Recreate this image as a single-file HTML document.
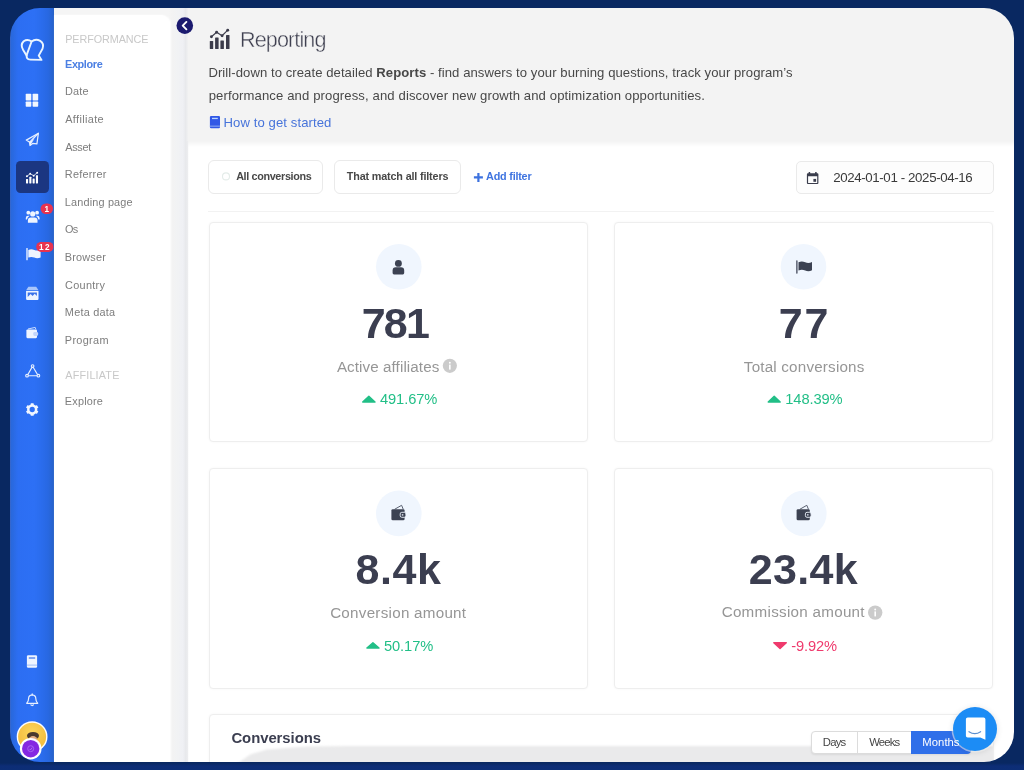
<!DOCTYPE html>
<html>
<head>
<meta charset="utf-8">
<title>Reporting</title>
<style>
*{box-sizing:border-box;margin:0;padding:0}
html,body{width:1024px;height:770px;overflow:hidden;background:linear-gradient(180deg,#092861 0,#092861 763px,#0d2d76 766px,#0c2e76 770px);font-family:"Liberation Sans",sans-serif;}
#win{position:absolute;left:10px;top:8px;width:1004px;height:754px;border-radius:30px;overflow:hidden;}
#pg{position:absolute;left:-10px;top:-8px;width:1024px;height:770px;filter:opacity(1);}
.a{position:absolute}
.t{position:absolute;white-space:nowrap}
.ov{position:absolute;left:0;top:0;overflow:visible}
#rail{left:10px;top:8px;width:44px;height:754px;background:linear-gradient(90deg,#3a66c6 0,#2968dc 1.5px,#2c6ef2 8px,#2d70f5 24px,#2a6cec 32px,#2868e2 38px,#2764d2 42px,#2660c6 44px);}
#subshade{left:54px;top:8px;width:132px;height:754px;background:linear-gradient(90deg,#f5f5f5 0,#f5f5f5 115px,#f3f3f3 118px,#f1f2f4 124px,#eff0f4 129px,#e8e9ec 131.5px,#e9eaed 132px);}
#sub{left:54px;top:15px;width:116px;height:747px;background:#fff;border-top-right-radius:9px;box-shadow:1px 0 2px rgba(255,255,255,.9)}
#main{left:186px;top:8px;width:828px;height:754px;background:linear-gradient(90deg,#e9eaed 0,#f3f3f3 2.5px);}
#content{left:188px;top:141px;width:826px;height:621px;background:linear-gradient(180deg,#f3f3f3 0,#fff 6px);}
.card{position:absolute;width:379px;height:220.5px;background:#fff;border:1px solid #eee;border-radius:4px;box-shadow:0 0 3px rgba(0,0,0,.035);}
.btn{position:absolute;border:1px solid #eaeaea;background:#fff;}
</style>
</head>

<body>
<div id="win"><div id="pg">
<div class="a" id="rail"></div>
<div class="a" id="subshade"></div>
<div class="a" id="sub"></div>
<div class="a" id="main"></div>
<div class="a" id="content"></div>
<div class="a" style="left:186px;top:141px;width:3px;height:621px;background:linear-gradient(90deg,#e9eaed 0,rgba(255,255,255,0) 100%)"></div>
<div class="a" style="left:15.9px;top:161.2px;width:33px;height:32px;border-radius:4.5px;background:#1b3681"></div>

<div class="btn" style="left:208px;top:160px;width:115px;height:34px;border-radius:6px"></div>
<div class="btn" style="left:334px;top:160px;width:126.5px;height:34px;border-radius:6px"></div>
<div class="btn" style="left:795.5px;top:160.5px;width:198px;height:33.5px;border-radius:5px;background:#fdfdfd"></div>
<div class="a" style="left:208px;top:210.5px;width:786px;height:1.5px;background:#f2f2f2"></div>

<div class="card" style="left:208.5px;top:221.8px"></div>
<div class="card" style="left:614px;top:221.8px"></div>
<div class="card" style="left:208.5px;top:468.2px"></div>
<div class="card" style="left:614px;top:468.2px"></div>

<div class="a" style="left:208.5px;top:714.3px;width:785px;height:80px;background:#fff;border:1px solid #eee;border-radius:4px;overflow:hidden;box-shadow:0 0 3px rgba(0,0,0,.035)">
  <div class="a" style="left:0;top:28px;width:785px;height:24px;filter:blur(1.1px)"><div class="a" style="left:0;top:1px;width:785px;height:20px;background:#eaeaeb;clip-path:polygon(3.4% 100%,5.2% 51%,7.3% 26%,12.3% 11.5%,17.3% 8%,100% 8%,100% 100%)"></div></div>
</div>

<!-- days / weeks / months -->
<div class="a" style="left:811px;top:731px;width:160px;height:23px;border:1px solid #dcdcdc;border-radius:4px;background:#fff;box-shadow:0 1px 2px rgba(0,0,0,.08)"></div>
<div class="a" style="left:857px;top:731px;width:1px;height:23px;background:#dcdcdc"></div>
<div class="a" style="left:910.5px;top:731px;width:60.5px;height:23px;background:#2f6fe9;border-radius:0 4px 4px 0"></div>
<!-- chat bubble -->
<div class="a" style="left:953px;top:707px;width:44px;height:44px;border-radius:50%;background:#1c8cf5;box-shadow:0 1px 6px rgba(0,0,0,.12),0 0 0 1.5px rgba(255,255,255,.55)"></div>

<svg class="ov" width="1024" height="770" viewBox="0 0 1024 770">
<!-- logo -->
<g fill="none" stroke="#eaf5ff" stroke-width="1.9" stroke-linejoin="round" stroke-linecap="round">
<path d="M31.6 41.5 L26.9 54.4 Q25.7 59.4 30.3 59.6 L41.5 59.9 L38.7 55.6 L42.5 48.8 Q44.4 43.6 40.2 40.9 Q35.6 38.4 31.6 41.5 Z"/>
<path d="M31.6 41.5 Q27.6 38.5 23.7 41.2 Q20.2 44.6 22.9 49.4 L26.5 55.4"/>
</g>
<!-- grid -->
<g fill="#f1f6ff">
<rect x="25.7" y="93.8" width="5.6" height="6.6" rx=".7"/><rect x="32.6" y="93.8" width="5.6" height="6.6" rx=".7"/>
<rect x="25.7" y="101.6" width="5.6" height="5.1" rx=".7"/><rect x="32.6" y="101.6" width="5.6" height="5.1" rx=".7"/>
</g>
<!-- paper plane -->
<g fill="none" stroke="#e6efff" stroke-width="1.25" stroke-linejoin="round">
<path d="M38.4 133.2 L26.3 140.1 L29.6 142.3 L30 145.5 L32.6 143.4 L36.9 143.9 Z"/>
<path d="M38.4 133.2 L29.6 142.3"/>
</g>
<path d="M29.6 142.3 L30 145.6 L34.6 138.6 Z" fill="#eef4ff"/>
<!-- chart (active) -->
<g fill="#fff">
<rect x="26" y="178.9" width="2.1" height="4.5" rx=".4"/><rect x="29.3" y="176.8" width="2.1" height="6.6" rx=".4"/>
<rect x="32.6" y="178.5" width="2.1" height="4.9" rx=".4"/><rect x="35.9" y="175.2" width="2.1" height="8.2" rx=".4"/>
<circle cx="26.9" cy="176.3" r=".95"/><circle cx="30.2" cy="173.7" r=".95"/><circle cx="33.7" cy="175.7" r=".95"/><circle cx="37.2" cy="172.7" r=".95"/>
</g>
<path d="M26.9 176.3 L30.2 173.7 L33.7 175.7 L37.2 172.7" fill="none" stroke="#fff" stroke-width=".8"/>
<!-- users -->
<g fill="#eef4ff">
<circle cx="32.7" cy="213.9" r="2.6"/><circle cx="28.3" cy="212.7" r="1.9"/><circle cx="37.1" cy="212.7" r="1.9"/>
<path d="M27.9 222.7 L27.9 220.6 Q27.9 217.6 30.9 217.6 L34.5 217.6 Q37.5 217.6 37.5 220.6 L37.5 222.7 Z"/>
<path d="M25.8 219.6 L25.8 217.9 Q25.8 215.8 28 215.8 L29.6 215.8 Q27.3 217.2 27 219.6 Z"/>
<path d="M39.6 219.6 L39.6 217.9 Q39.6 215.8 37.4 215.8 L35.8 215.8 Q38.1 217.2 38.4 219.6 Z"/>
</g>
<rect x="40.6" y="203.4" width="12.4" height="10.5" rx="5.2" fill="#e8334f"/>
<!-- flag -->
<rect x="26.3" y="247.9" width="1.4" height="12.4" rx=".6" fill="#e8f0ff"/>
<path d="M28.3 249.9 Q31.3 248.6 34.3 249.9 Q37.5 251.2 40.6 249.7 L40.6 257.4 Q37.5 258.9 34.3 257.6 Q31.3 256.3 28.3 257.6 Z" fill="#eef4ff"/>
<rect x="36.2" y="241.9" width="17.3" height="10" rx="5" fill="#e8334f"/>
<!-- images -->
<path d="M28.4 286.8 L36.2 286.8 L38.5 290.2 L26.1 290.2 Z" fill="#a9c6fb"/>
<path d="M26.1 290.9 H38.5 V299.1 Q38.5 299.9 37.7 299.9 H26.9 Q26.1 299.9 26.1 299.1 Z" fill="#eef4ff"/>
<path d="M27.7 292.4 H36.9 V296 L34.7 293.7 L32.6 296 L30.6 294 L27.7 297 Z" fill="#3a72ea"/>
<!-- wallet -->
<path d="M28 329 L35.2 327.4 L35.8 329.2" fill="none" stroke="#c9dcff" stroke-width="1"/>
<rect x="26.4" y="329.4" width="10.6" height="8.8" rx="1.1" fill="#eef4ff"/>
<rect x="33.3" y="331.9" width="4.8" height="4" rx="1.3" fill="#c4d6fb"/>
<!-- triangle nodes -->
<g fill="none" stroke="#e8f0ff" stroke-width="1.15">
<path d="M32.6 366.3 L27.2 375.7 L38.2 375.7 Z"/>
</g>
<g fill="#3a74ec" stroke="#e8f0ff" stroke-width="1.05"><circle cx="32.6" cy="366" r="1.35"/><circle cx="27" cy="375.7" r="1.35"/><circle cx="38.4" cy="375.7" r="1.35"/></g>
<!-- gear -->
<g transform="translate(32.2 409.5)">
<circle r="3.9" fill="none" stroke="#f1f6ff" stroke-width="2.5"/>
<g fill="#f1f6ff">
<rect x="-1.5" y="-6.3" width="3" height="2.4" rx=".5"/>
<rect x="-1.5" y="-6.3" width="3" height="2.4" rx=".5" transform="rotate(60)"/>
<rect x="-1.5" y="-6.3" width="3" height="2.4" rx=".5" transform="rotate(120)"/>
<rect x="-1.5" y="-6.3" width="3" height="2.4" rx=".5" transform="rotate(180)"/>
<rect x="-1.5" y="-6.3" width="3" height="2.4" rx=".5" transform="rotate(240)"/>
<rect x="-1.5" y="-6.3" width="3" height="2.4" rx=".5" transform="rotate(300)"/>
</g></g>
<!-- book -->
<rect x="26.9" y="655.3" width="10.2" height="12.4" rx="1.3" fill="#eef4ff"/>
<rect x="28.8" y="657.4" width="6.4" height="1.2" fill="#3a72ea"/>
<rect x="26.9" y="664.6" width="10.2" height="1" fill="#9fbdf8"/>
<!-- bell -->
<g fill="none" stroke="#e8f0ff" stroke-width="1.2" stroke-linejoin="round" stroke-linecap="round">
<path d="M26.7 703.3 Q28.6 701.6 28.6 698.6 Q28.6 695.2 32.2 694.9 Q35.8 695.2 35.8 698.6 Q35.8 701.6 37.7 703.3 Z"/>
<path d="M30.9 704.9 Q32.2 706.1 33.5 704.9"/>
<path d="M32.2 693.9 V694.8"/>
</g>
<!-- avatar -->
<defs><radialGradient id="av" cx="50%" cy="35%" r="70%"><stop offset="0" stop-color="#fbd55a"/><stop offset="1" stop-color="#f1b83a"/></radialGradient>
<clipPath id="avc"><circle cx="32.1" cy="736.7" r="14"/></clipPath></defs>
<circle cx="32.1" cy="736.7" r="15.4" fill="#fdfdfd"/>
<circle cx="32.1" cy="736.7" r="14" fill="url(#av)"/>
<g clip-path="url(#avc)"><ellipse cx="33" cy="735.8" rx="6" ry="3.9" fill="#4a3a2e"/><ellipse cx="33" cy="740.6" rx="4.4" ry="4.6" fill="#e2ae86"/></g>
<circle cx="30.7" cy="748.7" r="10.8" fill="#fdfdfd"/>
<circle cx="30.7" cy="748.7" r="8.7" fill="#8427e2"/>
<circle cx="30.7" cy="748.7" r="3" fill="none" stroke="#a866f0" stroke-width=".9"/>
<path d="M29.5 748.9 L30.5 749.9 L32.2 747.7" fill="none" stroke="#b783f4" stroke-width=".8"/>
<!-- collapse -->
<circle cx="184.8" cy="25.6" r="8.3" fill="#1b1a6f"/>
<path d="M186.4 21.9 L182.7 25.6 L186.4 29.3" fill="none" stroke="#fff" stroke-width="1.9" stroke-linecap="round" stroke-linejoin="round"/>
<!-- title icon -->
<g fill="#3c3c4b">
<rect x="209.8" y="41.1" width="3.4" height="7.8" rx=".5"/><rect x="215.1" y="37.4" width="3.5" height="11.5" rx=".5"/>
<rect x="220.4" y="40.6" width="3.5" height="8.3" rx=".5"/><rect x="226" y="34.9" width="3.5" height="14" rx=".5"/>
<circle cx="211.4" cy="36.7" r="1.45"/><circle cx="216.6" cy="32.2" r="1.45"/><circle cx="222.1" cy="35.7" r="1.45"/><circle cx="227.7" cy="30.2" r="1.45"/>
</g>
<path d="M211.4 36.7 L216.6 32.2 L222.1 35.7 L227.7 30.2" fill="none" stroke="#3c3c4b" stroke-width="1.15"/>
<!-- small book -->
<rect x="209.9" y="115.9" width="10.1" height="12.3" rx="1.2" fill="#3158e6"/>
<rect x="212" y="117.8" width="5.8" height="1.3" fill="#bcd6ff"/>
<rect x="209.9" y="125.6" width="10.1" height="1.1" fill="#88a6f3"/>
<!-- ring in All conversions -->
<circle cx="226" cy="176.4" r="3.5" fill="none" stroke="#e4ece9" stroke-width="1.1"/>
<!-- plus -->
<path d="M477.3 172.9 h2.2 v3.4 h3.4 v2.2 h-3.4 v3.4 h-2.2 v-3.4 h-3.4 v-2.2 h3.4 z" fill="#3d72df"/>
<!-- calendar -->
<g fill="#3a3d4c">
<path d="M807.9 173.2 H817.4 Q818.4 173.2 818.4 174.2 V183.1 Q818.4 184.1 817.4 184.1 H807.9 Q806.9 184.1 806.9 183.1 V174.2 Q806.9 173.2 807.9 173.2 Z M808.1 176.2 V182.9 H817.2 V176.2 Z" fill-rule="evenodd"/>
<rect x="808.6" y="171.9" width="1.6" height="2.4" rx=".4"/><rect x="815.1" y="171.9" width="1.6" height="2.4" rx=".4"/>
<rect x="813.4" y="178.9" width="2.7" height="2.9"/>
</g>
<!-- card icon circles -->
<g fill="#f0f6fe"><circle cx="398.8" cy="266.8" r="22.8"/><circle cx="803.5" cy="266.8" r="22.8"/><circle cx="398.8" cy="513.4" r="22.8"/><circle cx="803.8" cy="513.4" r="22.8"/></g>
<!-- person -->
<g fill="#3c4252"><circle cx="398.4" cy="263.4" r="3.45"/>
<path d="M392.6 273 V270.4 Q392.6 267.2 395.8 267.2 H401 Q404.2 267.2 404.2 270.4 V273 Q404.2 274.4 402.8 274.4 H394 Q392.6 274.4 392.6 273 Z"/></g>
<!-- flag -->
<rect x="796" y="260.2" width="1.7" height="13.6" rx=".7" fill="#6b7180"/>
<path d="M798.5 262.3 Q801.8 260.8 805.2 262.3 Q808.6 263.8 812 262 L812 270.2 Q808.6 272 805.2 270.5 Q801.8 269 798.5 270.5 Z" fill="#3c4252"/>
<!-- wallets -->
<g id="wal">
<path d="M394.6 509.3 L401.6 505.3 L403.3 509.4" fill="none" stroke="#596070" stroke-width="1"/>
<rect x="391.4" y="509.2" width="13.2" height="11.1" rx="1.4" fill="#3c4252"/>
<rect x="400.2" y="512.3" width="5.7" height="5" rx="1.6" fill="#3c4252" stroke="#edf4fd" stroke-width=".9"/>
<circle cx="402.6" cy="514.8" r=".9" fill="#cfd6e2"/>
</g>
<use href="#wal" x="405.2" y="0"/>
<!-- info icons -->
<circle cx="449.85" cy="365.8" r="7.1" fill="#cbcbcb"/><rect x="449.05" y="364.6" width="1.6" height="5" fill="#fff"/><circle cx="449.85" cy="362.7" r=".95" fill="#fff"/>
<circle cx="875.2" cy="612.6" r="7.2" fill="#cbcbcb"/><rect x="874.4" y="611.4" width="1.6" height="5" fill="#fff"/><circle cx="875.2" cy="609.5" r=".95" fill="#fff"/>
<!-- carets -->
<g fill="#22bf87" stroke="#22bf87" stroke-width="1.4" stroke-linejoin="round">
<path d="M368.85 396.3 L375 402 L362.7 402 Z"/>
<path d="M774.2 396.3 L780.2 402 L768.2 402 Z"/>
<path d="M372.95 642.8 L379 648.1 L366.9 648.1 Z"/>
</g>
<path d="M773.8 642.8 L786.3 642.8 L780.05 648.6 Z" fill="#ef3a6d" stroke="#ef3a6d" stroke-width="1.4" stroke-linejoin="round"/>
<!-- chat icon -->
<path d="M967.7 717.4 H983.6 Q985.4 717.4 985.4 719.2 V739.7 L980.3 737.6 H967.7 Q965.9 737.6 965.9 735.8 V719.2 Q965.9 717.4 967.7 717.4 Z" fill="#fff"/>
<path d="M969 731.7 Q974.8 735.7 980.6 731.7" fill="none" stroke="#5b8fd0" stroke-width="1.2" stroke-linecap="round"/>
</svg>
<div class="t" id="h_perf" style="left:65.15px;top:32.00px;font-size:10.8px;line-height:14px;color:#c8c8c8;letter-spacing:-0.065px;">PERFORMANCE</div>
<div class="t" id="n_exp" style="left:65.00px;top:57.00px;font-size:10.9px;line-height:14px;color:#4b7fe3;font-weight:bold;letter-spacing:-0.375px;">Explore</div>
<div class="t" id="n_date" style="left:65.00px;top:84.00px;font-size:10.9px;line-height:14px;color:#7d7d7d;letter-spacing:0.167px;">Date</div>
<div class="t" id="n_aff" style="left:65.25px;top:112.00px;font-size:10.9px;line-height:14px;color:#7d7d7d;letter-spacing:0.356px;">Affiliate</div>
<div class="t" id="n_asset" style="left:65.25px;top:140.00px;font-size:10.9px;line-height:14px;color:#7d7d7d;letter-spacing:-0.312px;">Asset</div>
<div class="t" id="n_ref" style="left:64.85px;top:167.00px;font-size:10.9px;line-height:14px;color:#7d7d7d;letter-spacing:0.214px;">Referrer</div>
<div class="t" id="n_land" style="left:64.85px;top:195.00px;font-size:10.9px;line-height:14px;color:#7d7d7d;letter-spacing:0.159px;">Landing page</div>
<div class="t" id="n_os" style="left:65.10px;top:222.00px;font-size:10.9px;line-height:14px;color:#7d7d7d;letter-spacing:-0.850px;">Os</div>
<div class="t" id="n_brow" style="left:64.85px;top:250.00px;font-size:10.9px;line-height:14px;color:#7d7d7d;letter-spacing:0.167px;">Browser</div>
<div class="t" id="n_cty" style="left:65.10px;top:278.00px;font-size:10.9px;line-height:14px;color:#7d7d7d;letter-spacing:0.275px;">Country</div>
<div class="t" id="n_meta" style="left:64.85px;top:305.00px;font-size:10.9px;line-height:14px;color:#7d7d7d;letter-spacing:0.238px;">Meta data</div>
<div class="t" id="n_prog" style="left:64.85px;top:333.00px;font-size:10.9px;line-height:14px;color:#7d7d7d;letter-spacing:0.317px;">Program</div>
<div class="t" id="h_aff" style="left:65.25px;top:368.00px;font-size:10.8px;line-height:14px;color:#c8c8c8;letter-spacing:0.188px;">AFFILIATE</div>
<div class="t" id="n_exp2" style="left:64.85px;top:394.00px;font-size:10.9px;line-height:14px;color:#7d7d7d;letter-spacing:0.192px;">Explore</div>
<div class="t" id="ttl" style="left:239.95px;top:26.00px;font-size:21.6px;line-height:28px;color:#3f4050;letter-spacing:-0.887px;-webkit-text-stroke:.4px #f3f3f3;">Reporting</div>
<div class="t" id="d1" style="left:208.40px;top:64.00px;font-size:13.1px;line-height:18px;color:#484848;letter-spacing:0.066px;">Drill-down to create detailed <b>Reports</b> - find answers to your burning questions, track your program’s</div>
<div class="t" id="d2" style="left:208.65px;top:87.00px;font-size:13.1px;line-height:18px;color:#484848;letter-spacing:0.117px;">performance and progress, and discover new growth and optimization opportunities.</div>
<div class="t" id="how" style="left:223.50px;top:114.00px;font-size:13.1px;line-height:18px;color:#4673da;letter-spacing:0.094px;">How to get started</div>
<div class="t" id="b1" style="left:236.15px;top:169.00px;font-size:10.8px;line-height:14px;color:#484848;font-weight:bold;letter-spacing:-0.346px;">All conversions</div>
<div class="t" id="b2" style="left:346.80px;top:169.00px;font-size:10.8px;line-height:14px;color:#484848;font-weight:bold;letter-spacing:-0.160px;">That match all filters</div>
<div class="t" id="b3" style="left:486.05px;top:169.00px;font-size:10.8px;line-height:14px;color:#3f74e0;font-weight:bold;letter-spacing:-0.200px;">Add filter</div>
<div class="t" id="dt" style="left:833.20px;top:169.00px;font-size:13.3px;line-height:18px;color:#3a3a3a;letter-spacing:-0.380px;">2024-01-01 - 2025-04-16</div>
<div class="t" id="n1" style="left:361.65px;top:296.00px;font-size:43px;line-height:54px;color:#3b3e50;font-weight:bold;letter-spacing:-1.775px;">781</div>
<div class="t" id="n2" style="left:778.75px;top:296.00px;font-size:43px;line-height:54px;color:#3b3e50;font-weight:bold;letter-spacing:1.850px;">77</div>
<div class="t" id="n3" style="left:355.45px;top:542.00px;font-size:43px;line-height:54px;color:#3b3e50;font-weight:bold;letter-spacing:0.633px;">8.4k</div>
<div class="t" id="n4" style="left:748.70px;top:542.00px;font-size:43px;line-height:54px;color:#3b3e50;font-weight:bold;letter-spacing:0.312px;">23.4k</div>
<div class="t" id="l1" style="left:336.90px;top:357.00px;font-size:15.2px;line-height:20px;color:#969696;letter-spacing:0.084px;">Active affiliates</div>
<div class="t" id="l2" style="left:743.85px;top:357.00px;font-size:15.2px;line-height:20px;color:#969696;letter-spacing:0.197px;">Total conversions</div>
<div class="t" id="l3" style="left:330.15px;top:603.00px;font-size:15.2px;line-height:20px;color:#969696;letter-spacing:0.263px;">Conversion amount</div>
<div class="t" id="l4" style="left:721.65px;top:602.00px;font-size:15.2px;line-height:20px;color:#969696;letter-spacing:0.281px;">Commission amount</div>
<div class="t" id="p1" style="left:379.95px;top:389.00px;font-size:14.7px;line-height:20px;color:#22bf87;letter-spacing:-0.092px;">491.67%</div>
<div class="t" id="p2" style="left:785.25px;top:389.00px;font-size:14.7px;line-height:20px;color:#22bf87;letter-spacing:-0.092px;">148.39%</div>
<div class="t" id="p3" style="left:383.90px;top:636.00px;font-size:14.7px;line-height:20px;color:#22bf87;letter-spacing:-0.070px;">50.17%</div>
<div class="t" id="p4" style="left:791.30px;top:636.00px;font-size:14.7px;line-height:20px;color:#ef3a6d;letter-spacing:-0.140px;">-9.92%</div>
<div class="t" id="cv" style="left:231.40px;top:728.00px;font-size:14.9px;line-height:20px;color:#3b3e50;font-weight:bold;letter-spacing:-0.055px;">Conversions</div>
<div class="t" id="g1" style="left:822.75px;top:734.00px;font-size:11.3px;line-height:16px;color:#444;letter-spacing:-0.750px;">Days</div>
<div class="t" id="g2" style="left:869.20px;top:734.00px;font-size:11.3px;line-height:16px;color:#444;letter-spacing:-0.825px;">Weeks</div>
<div class="t" id="g3" style="left:922.35px;top:734.00px;font-size:11.3px;line-height:16px;color:#fff;letter-spacing:0.020px;">Months</div>
<div class="t" id="bd1" style="left:44.60px;top:204.00px;font-size:8.2px;line-height:12px;color:#fff;font-weight:bold;">1</div>
<div class="t" id="bd2" style="left:39.10px;top:242.00px;font-size:8.2px;line-height:12px;color:#fff;font-weight:bold;letter-spacing:1.400px;">12</div>
</div></div>
</body>
</html>
